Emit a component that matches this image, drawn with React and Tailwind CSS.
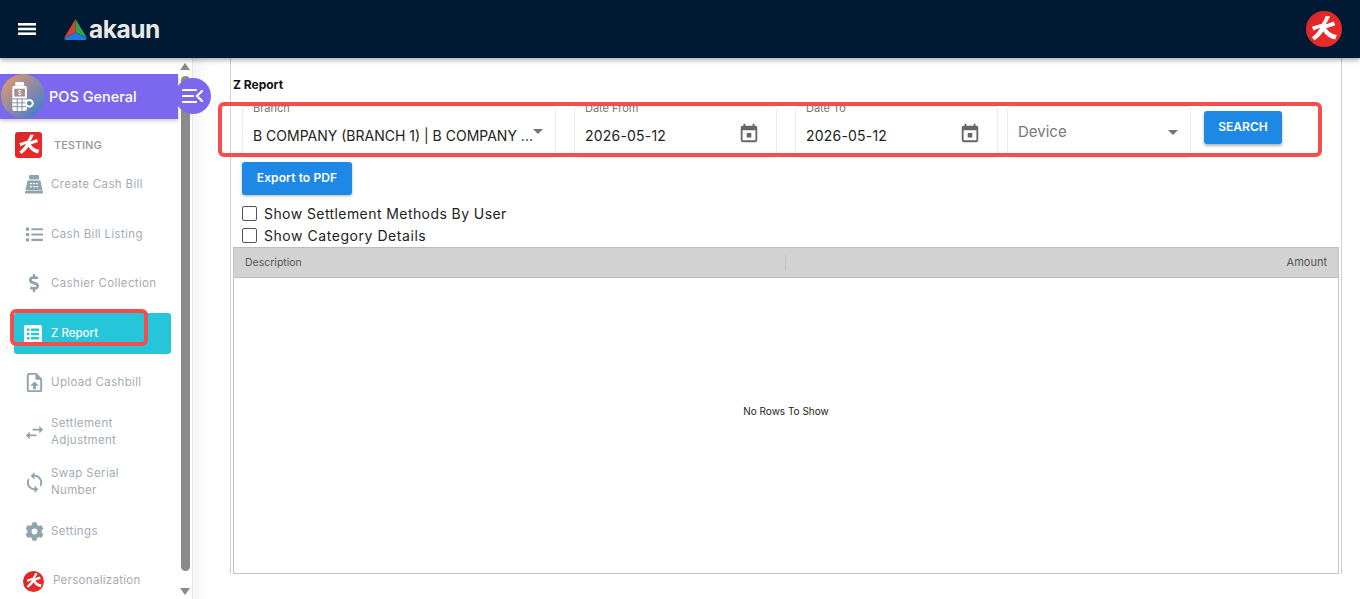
import React from "react";
import { FaList, FaCog, FaDollarSign } from "react-icons/fa";
import { MdSwapHoriz, MdSync } from "react-icons/md";

const BrandMark = ({ className }) => (
  <svg viewBox="0 0 40 40" className={className}>
    <path
      d="M28 3 C26 8 24 11 22 14 L33 10 L35 15 L23 19 C26 24 31 27 37 28 L35 34 C28 33 22 28 19 23 C16 28 12 32 7 35 L4 31 C9 27 13 22 15 18 L6 22 L4 17 L17 13 C19 10 21 7 22 3 Z"
      fill="#fff"
    />
  </svg>
);

const NavIcon = ({ children }) => (
  <span className="w-[20px] flex justify-center text-[#90a4ae] shrink-0">
    {children}
  </span>
);

const NavRow = ({ icon, label, className = "" }) => (
  <div className={`flex items-center gap-[7px] pl-[24px] ${className}`}>
    <NavIcon>{icon}</NavIcon>
    <span className="text-[11.5px] leading-[17px] tracking-[0.35px] text-[#a3acb5]">{label}</span>
  </div>
);

const Register = () => (
  <svg viewBox="0 0 20 20" className="w-[20px] h-[20px]" fill="#90a4ae">
    <rect x="5" y="1" width="10" height="4.5" rx="1" />
    <path d="M3.5 6.5h13l2 10H1.5z" />
    <rect x="1" y="17" width="18" height="2.5" rx="0.8" />
    <g fill="#fff">
      <rect x="6" y="9" width="2" height="1.2" />
      <rect x="9" y="9" width="2" height="1.2" />
      <rect x="12" y="9" width="2" height="1.2" />
      <rect x="6" y="12" width="2" height="1.2" />
      <rect x="9" y="12" width="2" height="1.2" />
      <rect x="12" y="12" width="2" height="1.2" />
    </g>
  </svg>
);

const UploadFile = () => (
  <svg viewBox="0 0 24 24" className="w-[23px] h-[23px] shrink-0" fill="#90a4ae">
    <path d="M14 2H6a2 2 0 0 0-2 2v16a2 2 0 0 0 2 2h12a2 2 0 0 0 2-2V8zm4 18H6V4h7v5h5zM7.5 15.5h3V19h3v-3.5h3L12 11z" />
  </svg>
);

const ReportIcon = () => (
  <svg viewBox="0 0 18 18" className="w-[18px] h-[18px]">
    <rect width="18" height="18" rx="1.5" fill="#fff" />
    <g fill="#26c6da">
      <rect x="3" y="3.5" width="2.5" height="2.5" />
      <rect x="7" y="3.5" width="8" height="2.5" />
      <rect x="3" y="7.7" width="2.5" height="2.5" />
      <rect x="7" y="7.7" width="8" height="2.5" />
      <rect x="3" y="12" width="2.5" height="2.5" />
      <rect x="7" y="12" width="8" height="2.5" />
    </g>
  </svg>
);

const CalendarIcon = () => (
  <svg viewBox="0 0 24 24" className="w-[22px] h-[22px] mt-[2px]" fill="#666">
    <path d="M19 4h-1V2h-2v2H8V2H6v2H5a2 2 0 0 0-2 2v14a2 2 0 0 0 2 2h14a2 2 0 0 0 2-2V6a2 2 0 0 0-2-2zm0 16H5V9h14zM9.5 12h5v5h-5z" />
  </svg>
);

const Caret = ({ className = "" }) => (
  <span className={`block w-0 h-0 border-x-[5px] border-x-transparent border-t-[5px] border-t-[#757575] ${className}`} />
);

const Field = ({ label, className, children }) => (
  <div className={`relative h-[52px] border border-[#ececec] rounded-[4px] pl-[10px] flex items-center justify-between ${className}`}>
    {label && (
      <span className="absolute left-[10px] top-[-5px] text-[11px] leading-[12px] text-[#777]">
        {label}
      </span>
    )}
    {children}
  </div>
);

const App = () => {
  return (
    <div className="relative h-[599px] w-[1360px] overflow-hidden flex flex-col bg-white font-['Inter',sans-serif]">
      {/* Header */}
      <header className="relative z-20 h-[58px] shrink-0 bg-[#001a33] shadow-[0_2px_5px_rgba(0,0,0,0.35)] flex items-center justify-between pl-[18px] pr-[18px]">
        <div className="flex items-center">
          <svg viewBox="0 0 18 12" className="w-[18px] h-[12px]" fill="#fff">
            <rect y="0" width="18" height="2.6" />
            <rect y="4.7" width="18" height="2.6" />
            <rect y="9.4" width="18" height="2.6" />
          </svg>
          <svg viewBox="0 0 23 21" className="w-[23px] h-[21px] ml-[28px]">
            <path d="M11.5 0 L0 19 L11.5 13.5 Z" fill="#d9402c" />
            <path d="M11.5 0 L23 19 L11.5 13.5 Z" fill="#2fa34f" />
            <path d="M11.5 13.5 L22.5 19 Q23 21 21 21 L2 21 Q0 21 0.5 19 Z" fill="#1e7be0" />
          </svg>
          <span className="ml-[2px] text-[24.5px] font-bold tracking-[-0.5px] leading-none text-[#e8e8e8]">
            akaun
          </span>
        </div>
        <div className="w-[36px] h-[36px] rounded-full bg-gradient-to-br from-[#d8262a] to-[#ee2c24] flex items-center justify-center">
          <BrandMark className="w-[30px] h-[30px]" />
        </div>
      </header>

      <div className="flex flex-1 min-h-0">
        {/* Sidebar */}
        <aside className="relative w-[193px] shrink-0 border-r border-[#e6e6e6] flex">
          <nav className="w-[178px] shrink-0 pt-[16px]">
            <div className="relative h-[45px] bg-[#7b68ee] shadow-[0_2px_4px_rgba(0,0,0,0.2)] flex items-center">
              <div className="absolute left-[1px] top-0 w-[44px] h-[44px] rounded-full bg-gradient-to-br from-[#ee9a50] via-[#8f8aa0] to-[#1478d8] flex items-center justify-center">
                <svg viewBox="0 0 24 32" className="w-[24px] h-[31px]" fill="#fff">
                  <rect x="4" y="1" width="9" height="4" rx="0.5" />
                  <rect x="1" y="5" width="15" height="26" rx="2" />
                  <rect x="3" y="8" width="11" height="8" fill="#a58d90" />
                  <text x="8.5" y="14.8" fontSize="7" textAnchor="middle" fill="#fff">$</text>
                  <g fill="#7f8fa6">
                    <rect x="5.5" y="18" width="1" height="13" />
                    <rect x="10.5" y="18" width="1" height="13" />
                    <rect x="1" y="18" width="15" height="1" />
                    <rect x="1" y="22" width="15" height="1" />
                    <rect x="1" y="26" width="15" height="1" />
                  </g>
                  <circle cx="18.5" cy="23" r="4.5" />
                  <circle cx="18.5" cy="23" r="2.4" fill="#4f86b8" />
                </svg>
              </div>
              <span className="ml-[49px] text-[14.5px] font-medium text-white">POS General</span>
            </div>

            <div className="flex items-center h-[28px] mt-[12px] pl-[15px]">
              <div className="w-[27px] h-[26px] rounded-[3px] bg-gradient-to-br from-[#d8262a] to-[#ee2c24] flex items-center justify-center">
                <BrandMark className="w-[24px] h-[24px]" />
              </div>
              <span className="ml-[12px] text-[11px] font-medium text-[#8f969c]">TESTING</span>
            </div>

            <NavRow className="mt-[13px] h-[24px]" icon={<Register />} label="Create Cash Bill" />
            <NavRow className="mt-[26px] h-[24px]" icon={<FaList className="w-[17px] h-[17px]" />} label="Cash Bill Listing" />
            <NavRow className="mt-[25px] h-[24px]" icon={<FaDollarSign className="w-[18px] h-[18px]" />} label="Cashier Collection" />

            <div className="mt-[18px] ml-[14px] mr-[7px] h-[41px] rounded-[3px] bg-[#26c6da] flex items-center gap-[9px] pl-[10px]">
              <ReportIcon />
              <span className="text-[11.5px] font-medium text-white">Z Report</span>
            </div>

            <NavRow className="mt-[16px] h-[24px]" icon={<UploadFile />} label="Upload Cashbill" />
            <NavRow className="mt-[21px] h-[34px]" icon={<MdSwapHoriz className="w-[23px] h-[23px] shrink-0" />} label={<>Settlement<br />Adjustment</>} />
            <NavRow className="mt-[16px] h-[34px]" icon={<MdSync className="w-[23px] h-[23px] shrink-0" />} label={<>Swap Serial<br />Number</>} />
            <NavRow className="mt-[20px] h-[24px]" icon={<FaCog className="w-[19px] h-[19px]" />} label="Settings" />

            <div className="flex items-center mt-[26px] h-[24px] pl-[23px]">
              <div className="w-[21px] h-[21px] rounded-full bg-gradient-to-br from-[#d8262a] to-[#ee2c24] flex items-center justify-center">
                <BrandMark className="w-[18px] h-[18px]" />
              </div>
              <span className="ml-[9px] text-[11.5px] tracking-[0.3px] text-[#a3acb5]">Personalization</span>
            </div>
          </nav>

          {/* Scrollbar */}
          <div className="w-[15px] flex flex-col items-center pt-[5px] pb-[4px]">
            <span className="block w-0 h-0 border-x-[5px] border-x-transparent border-b-[7px] border-b-[#8a8a8a]" />
            <div className="w-[9px] flex-1 rounded-[5px] bg-[#8a8a8a] mt-[6px] mb-[17px]" />
            <span className="block w-0 h-0 border-x-[5px] border-x-transparent border-t-[7px] border-t-[#8a8a8a]" />
          </div>

          {/* Collapse button */}
          <div className="absolute left-[175px] top-[20px] z-10 w-[36px] h-[36px] rounded-full bg-[#7b68ee] flex items-center justify-center">
            <svg viewBox="0 0 22 16" className="w-[22px] h-[16px]" fill="none" stroke="#fff" strokeWidth="2.2" strokeLinecap="round">
              <path d="M1 2h13M1 8h10M1 14h13M20 3l-5 5 5 5" />
            </svg>
          </div>
        </aside>

        {/* Main */}
        <main className="relative flex-1 min-w-0 bg-[linear-gradient(to_right,#f4f4f4,#ffffff_17px)] pl-[37px] pr-[18px]">
          <div className="h-[516px] border-x border-[#cfcfcf] bg-white flex flex-col">
            <h1 className="mt-[19px] ml-[2px] text-[12px] leading-[16px] font-bold text-[#111]">Z Report</h1>

            <div className="flex items-start mt-[13px] ml-[11px]">
              <Field label="Branch" className="w-[314px] pr-[13px]">
                <span className="text-[14px] text-[#222] whitespace-nowrap mt-[6px]">B COMPANY (BRANCH 1) | B COMPANY ...</span>
                <Caret className="mb-[2px]" />
              </Field>
              <Field label="Date From" className="w-[203px] ml-[18px] pr-[16px]">
                <span className="text-[14px] tracking-[0.2px] text-[#222] mt-[6px]">2026-05-12</span>
                <CalendarIcon />
              </Field>
              <Field label="Date To" className="w-[203px] ml-[18px] pr-[16px]">
                <span className="text-[14px] tracking-[0.2px] text-[#222] mt-[6px]">2026-05-12</span>
                <CalendarIcon />
              </Field>
              <Field className="w-[184px] ml-[9px] pr-[12px]">
                <span className="text-[15px] text-[#777]">Device</span>
                <Caret />
              </Field>
              <button className="ml-[13px] mt-[5px] w-[78px] h-[33px] pb-[1px] rounded-[3px] bg-[#1e88e5] text-white text-[12px] font-semibold shadow-[0_2px_3px_rgba(0,0,0,0.3)]">
                SEARCH
              </button>
            </div>

            <button className="mt-[4px] ml-[11px] w-[110px] h-[33px] pb-[1px] rounded-[3px] bg-[#1e88e5] text-white text-[12px] tracking-[0.1px] font-semibold shadow-[0_1px_3px_rgba(0,0,0,0.3)]">
              Export to PDF
            </button>

            <div className="mt-[10px] ml-[11px] flex flex-col gap-[6px]">
              <label className="flex items-center gap-[7px] h-[16px] text-[14px] tracking-[0.42px] text-[#222]">
                <span className="w-[15px] h-[15px] border border-[#555] rounded-[2px]" />
                Show Settlement Methods By User
              </label>
              <label className="flex items-center gap-[7px] h-[16px] text-[14px] tracking-[0.55px] text-[#222]">
                <span className="w-[15px] h-[15px] border border-[#555] rounded-[2px]" />
                Show Category Details
              </label>
            </div>

            {/* Grid */}
            <div className="mt-[4px] ml-[2px] mr-[2px] flex-1 border border-t-0 border-[#c4c4c4] flex flex-col">
              <div className="h-[31px] bg-[#d2d2d2] border-y border-[#bdbdbd] flex items-center justify-between pr-[11px] text-[#555]">
                <span className="w-[552px] pl-[11px] h-[15px] leading-[15px] border-r border-[#c2c2c2] text-[10.5px]">Description</span>
                <span className="text-[11px]">Amount</span>
              </div>
              <div className="flex-1 flex items-center justify-center pb-[28px] text-[10px] text-[#222]">
                No Rows To Show
              </div>
            </div>
          </div>

          {/* Red annotation */}
          <div className="absolute left-[25px] top-[44px] w-[1104px] h-[55px] border-[4px] border-[#f44d4d] rounded-[6px] pointer-events-none" />
        </main>
      </div>

      {/* Red annotation on sidebar item */}
      <div className="absolute left-[10px] top-[309px] w-[138px] h-[37px] border-[4px] border-[#f44d4d] rounded-[6px] pointer-events-none z-30" />
    </div>
  );
};

export default App;
